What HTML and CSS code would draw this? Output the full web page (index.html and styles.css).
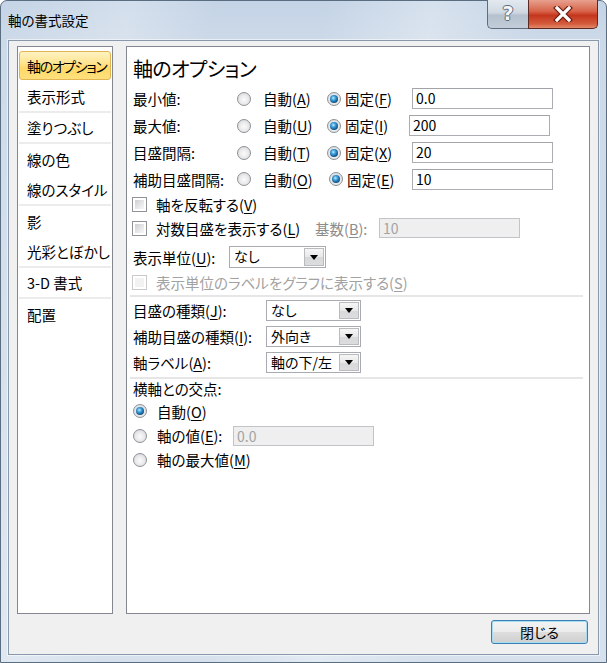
FILE: index.html
```html
<!DOCTYPE html>
<html lang="ja">
<head>
<meta charset="utf-8">
<title>軸の書式設定</title>
<link rel="stylesheet" href="styles.css">
</head>
<body>
<div class="window">
  <div class="titlebar">
    <span class="title">軸の書式設定</span>
    <div class="caps">
      <div class="cap-help">?</div>
      <div class="cap-close">
        <svg width="20" height="16" viewBox="0 0 20 16">
          <path d="M4 2 L16 14 M16 2 L4 14" stroke="#6a1d12" stroke-width="5.5" stroke-linecap="square" fill="none"/>
          <path d="M4 2 L16 14 M16 2 L4 14" stroke="#ffffff" stroke-width="3.2" stroke-linecap="square" fill="none"/>
        </svg>
      </div>
    </div>
  </div>
  <div class="client">
    <div class="panes">
      <ul class="nav">
        <li class="sel">軸のオプション</li>
        <li class="sep">表示形式</li>
        <li class="sep">塗りつぶし</li>
        <li>線の色</li>
        <li class="sep">線のスタイル</li>
        <li>影</li>
        <li class="sep">光彩とぼかし</li>
        <li class="sep">3-D 書式</li>
        <li>配置</li>
      </ul>
      <div class="panel">
        <div class="heading">軸のオプション</div>

        <div class="vrow">
          <span class="lbl">最小値:</span>
          <span class="opt1"><span class="rb"></span><span class="rt">自動(<u>A</u>)</span></span>
          <span class="opt2"><span class="rb on"></span><span class="rt">固定(<u>F</u>)</span></span>
          <span class="tb">0.0</span>
        </div>
        <div class="vrow">
          <span class="lbl">最大値:</span>
          <span class="opt1"><span class="rb"></span><span class="rt">自動(<u>U</u>)</span></span>
          <span class="opt2"><span class="rb on"></span><span class="rt">固定(<u>I</u>)</span></span>
          <span class="tb shift-l">200</span>
        </div>
        <div class="vrow">
          <span class="lbl">目盛間隔:</span>
          <span class="opt1"><span class="rb"></span><span class="rt">自動(<u>T</u>)</span></span>
          <span class="opt2"><span class="rb on"></span><span class="rt">固定(<u>X</u>)</span></span>
          <span class="tb">20</span>
        </div>
        <div class="vrow short">
          <span class="lbl">補助目盛間隔:</span>
          <span class="opt1"><span class="rb"></span><span class="rt">自動(<u>O</u>)</span></span>
          <span class="opt2 shift-r"><span class="rb on"></span><span class="rt">固定(<u>E</u>)</span></span>
          <span class="tb">10</span>
        </div>

        <div class="crow">
          <span class="cb"></span><span class="ct">軸を反転する(<u>V</u>)</span>
        </div>
        <div class="crow">
          <span class="cb"></span><span class="ct log">対数目盛を表示する(<u>L</u>)</span>
          <span class="base">基数(<u>B</u>):</span>
          <span class="tb dis">10</span>
        </div>
        <div class="urow">
          <span class="ulbl">表示単位(<u>U</u>):</span>
          <span class="combo wide"><span class="ctext">なし</span><span class="cbtn"></span></span>
        </div>
        <div class="crow">
          <span class="cb dis"></span><span class="ct gray">表示単位のラベルをグラフに表示する(<u>S</u>)</span>
        </div>

        <div class="rule"></div>

        <div class="drow">
          <span class="dlbl">目盛の種類(<u>J</u>):</span>
          <span class="combo"><span class="ctext">なし</span><span class="cbtn"></span></span>
        </div>
        <div class="drow">
          <span class="dlbl">補助目盛の種類(<u>I</u>):</span>
          <span class="combo"><span class="ctext">外向き</span><span class="cbtn"></span></span>
        </div>
        <div class="drow">
          <span class="dlbl">軸ラベル(<u>A</u>):</span>
          <span class="combo"><span class="ctext">軸の下/左</span><span class="cbtn"></span></span>
        </div>

        <div class="rule r2"></div>

        <div class="xlbl">横軸との交点:</div>
        <div class="xrow r1">
          <span class="rb on"></span><span class="xt">自動(<u>O</u>)</span>
        </div>
        <div class="xrow r2">
          <span class="rb"></span><span class="xt xval">軸の値(<u>E</u>):</span>
          <span class="tb dis">0.0</span>
        </div>
        <div class="xrow r3">
          <span class="rb"></span><span class="xt">軸の最大値(<u>M</u>)</span>
        </div>
      </div>
    </div>
    <div class="footer">
      <button class="btn">閉じる</button>
    </div>
  </div>
</div>
</body>
</html>
```

FILE: styles.css
```css
* { box-sizing: border-box; }
html, body { margin: 0; padding: 0; }
body {
  width: 607px;
  height: 663px;
  overflow: hidden;
  background: #ffffff;
  font-family: "Noto Sans CJK JP", "Noto Sans", sans-serif;
  font-feature-settings: "palt";
  font-size: 14.5px;
  color: #000;
}
u { text-decoration: underline; text-underline-offset: 2px; text-decoration-thickness: 1px; }

.window {
  width: 607px;
  height: 663px;
  display: flex;
  flex-direction: column;
  border: 1px solid #5b6d80;
  border-radius: 7px 7px 0 0;
  background:
    linear-gradient(100deg, rgba(255,255,255,0) 0%, rgba(255,255,255,0.25) 18%, rgba(255,255,255,0) 30%, rgba(255,255,255,0) 45%, rgba(255,255,255,0.3) 60%, rgba(255,255,255,0) 75%),
    linear-gradient(180deg, #c4d4e6 0px, #ccd9e8 40px, #d6e1ed 100%);
}

.titlebar {
  height: 39px;
  display: flex;
  justify-content: space-between;
  align-items: flex-start;
}
.title {
  margin: 9px 0 0 7px;
  line-height: 20px;
  font-size: 13.5px;
  color: #000;
}
.caps {
  display: flex;
  margin: -1px 8px 0 0;
}
.cap-help {
  width: 41px;
  height: 29px;
  border: 1px solid #5f6e7e;
  border-top: none;
  border-right: none;
  border-radius: 0 0 0 5px;
  background: linear-gradient(180deg, #e3e9f0 0%, #cfd8e2 45%, #b5c1ce 55%, #c2cdd9 100%);
  color: #f4f6f8;
  font-family: "DejaVu Sans", sans-serif;
  font-weight: bold;
  font-size: 19px;
  line-height: 27px;
  text-align: center;
  text-shadow: -1px 0 #5f6b78, 1px 0 #5f6b78, 0 -1px #5f6b78, 0 1px #5f6b78;
}
.cap-close {
  width: 70px;
  height: 29px;
  border: 1px solid #5c2a22;
  border-top: none;
  border-radius: 0 0 5px 0;
  background: linear-gradient(180deg, #e7a08e 0%, #d7644a 40%, #c4361d 55%, #d45b3d 85%, #e38a6a 100%);
  display: flex;
  align-items: center;
  justify-content: center;
}

.client {
  flex: 1;
  margin: 0 7px 7px 7px;
  border: 1px solid #8899ab;
  box-shadow: 0 0 0 1px rgba(255,255,255,0.55);
  background: #f0f0f0;
  padding: 5px 8px 10px 8px;
  display: flex;
  flex-direction: column;
}
.panes {
  height: 568px;
  display: flex;
  gap: 13px;
}

.nav {
  width: 96px;
  margin: 0;
  padding: 4px 1px 0 1px;
  list-style: none;
  background: #fff;
  border: 1px solid #828790;
}
.nav li {
  height: 31px;
  display: flex;
  align-items: center;
  padding-left: 8px;
  white-space: nowrap;
  font-size: 14.5px;
}
.nav li.sep { border-bottom: 2px solid #ececec; }
.nav li.sel {
  height: 29px;
  margin-bottom: 2px;
  padding-left: 7px;
  border: 1px solid #e2b452;
  border-radius: 3px;
  background: linear-gradient(180deg, #fff3c2 0%, #ffe592 40%, #ffd968 60%, #ffe07c 100%);
  font-size: 14px;
  letter-spacing: -1.4px;
}

.panel {
  flex: 1;
  background: #fff;
  border: 1px solid #828790;
  padding: 8px 6px 0 6px;
  display: flex;
  flex-direction: column;
}
.heading {
  height: 28px;
  line-height: 28px;
  font-size: 20px;
  margin-bottom: 2px;
  letter-spacing: -0.6px;
}

.vrow { height: 27px; display: flex; align-items: center; }
.vrow.short { height: 26px; }
.lbl { width: 104px; white-space: nowrap; }
.opt1 { width: 90px; display: flex; align-items: center; }
.opt1 .rt { margin-left: 12px; }
.opt2 { width: 85px; display: flex; align-items: center; }
.opt2 .rt { margin-left: 4px; }
.opt2.shift-r { padding-left: 2px; }
.rt { white-space: nowrap; }

.rb {
  width: 14px;
  height: 14px;
  flex: none;
  border-radius: 50%;
  border: 1px solid #8d9298;
  background: radial-gradient(circle at 50% 55%, #fbfbfb 0%, #ebebeb 45%, #cdd0d4 100%);
  position: relative;
}
.rb.on::after {
  content: "";
  position: absolute;
  left: 2px; top: 2px;
  width: 8px; height: 8px;
  border-radius: 50%;
  background: radial-gradient(circle at 42% 38%, #c7ecff 0%, #46a7e0 28%, #125a92 65%, #0a2f52 100%);
}

.tb {
  width: 141px;
  height: 21px;
  border: 1px solid #abadb3;
  border-top-color: #a0a3aa;
  background: #fff;
  padding-left: 3px;
  font-size: 14px;
  line-height: 19px;
  white-space: nowrap;
}
.tb.shift-l { margin-left: -3px; }
.tb.dis {
  background: #efefef;
  border-color: #c2c4c8;
  color: #a3a3a3;
  height: 20px;
  line-height: 18px;
}

.crow { height: 24px; display: flex; align-items: center; }
.cb {
  width: 15px;
  height: 15px;
  flex: none;
  margin-left: -1px;
  border: 1px solid #8f9296;
  background: #fff;
  position: relative;
}
.cb::after {
  content: "";
  position: absolute;
  inset: 2px;
  background: linear-gradient(135deg, #cdcfd2 0%, #e6e7e8 55%, #f6f6f6 100%);
}
.cb.dis { border-color: #c9cacc; }
.cb.dis::after { background: #f2f2f2; }
.ct { margin-left: 9px; white-space: nowrap; }
.ct.log { width: 159px; }
.ct.gray { color: #a2a2a2; }
.base { width: 64px; color: #8c8c8c; white-space: nowrap; }

.urow { height: 26px; margin-top: 4px; display: flex; align-items: center; }
.ulbl { width: 96px; white-space: nowrap; }

.combo {
  width: 95px;
  height: 21px;
  display: flex;
  border: 1px solid #a8abb2;
  background: #fff;
}
.combo.wide { width: 97px; height: 22px; }
.ctext { flex: 1; padding-left: 4px; line-height: 18px; white-space: nowrap; font-size: 14px; }
.cbtn {
  width: 20px;
  margin: 1px;
  border: 1px solid #b9bbbf;
  background: linear-gradient(180deg, #f6f6f6 0%, #e8e8e8 50%, #d7d8da 51%, #dcdddf 100%);
  position: relative;
}
.cbtn::after {
  content: "";
  position: absolute;
  left: 50%; top: 50%;
  margin: -2px 0 0 -4px;
  border-left: 4px solid transparent;
  border-right: 4px solid transparent;
  border-top: 5px solid #000;
}

.rule {
  height: 2px;
  margin: 1px 0 0 -3px;
  background: #e6e6e6;
}
.rule.r2 { margin-top: 2px; }

.drow { height: 26px; display: flex; align-items: center; }
.dlbl { width: 133px; white-space: nowrap; }

.xlbl { height: 20px; line-height: 20px; white-space: nowrap; }
.xrow { display: flex; align-items: center; }
.xrow.r1 { height: 24px; }
.xrow.r2 { height: 25px; }
.xrow.r3 { height: 23px; }
.xt { margin-left: 10px; white-space: nowrap; }
.xt.xval { width: 76px; }

.footer {
  margin-top: 6px;
  height: 24px;
  display: flex;
  justify-content: flex-end;
  padding-right: 2px;
}
.btn {
  width: 97px;
  height: 24px;
  border: 1px solid #3c7fb1;
  border-radius: 3px;
  box-shadow: inset 0 0 0 1px #a8dcf5;
  background: linear-gradient(180deg, #f3f3f3 0%, #ececec 48%, #dddddd 52%, #cfcfcf 100%);
  font-family: "Noto Sans CJK JP", "Noto Sans", sans-serif;
  font-feature-settings: "palt";
  font-size: 14px;
  color: #000;
  padding: 0;
  line-height: 20px;
}
```
